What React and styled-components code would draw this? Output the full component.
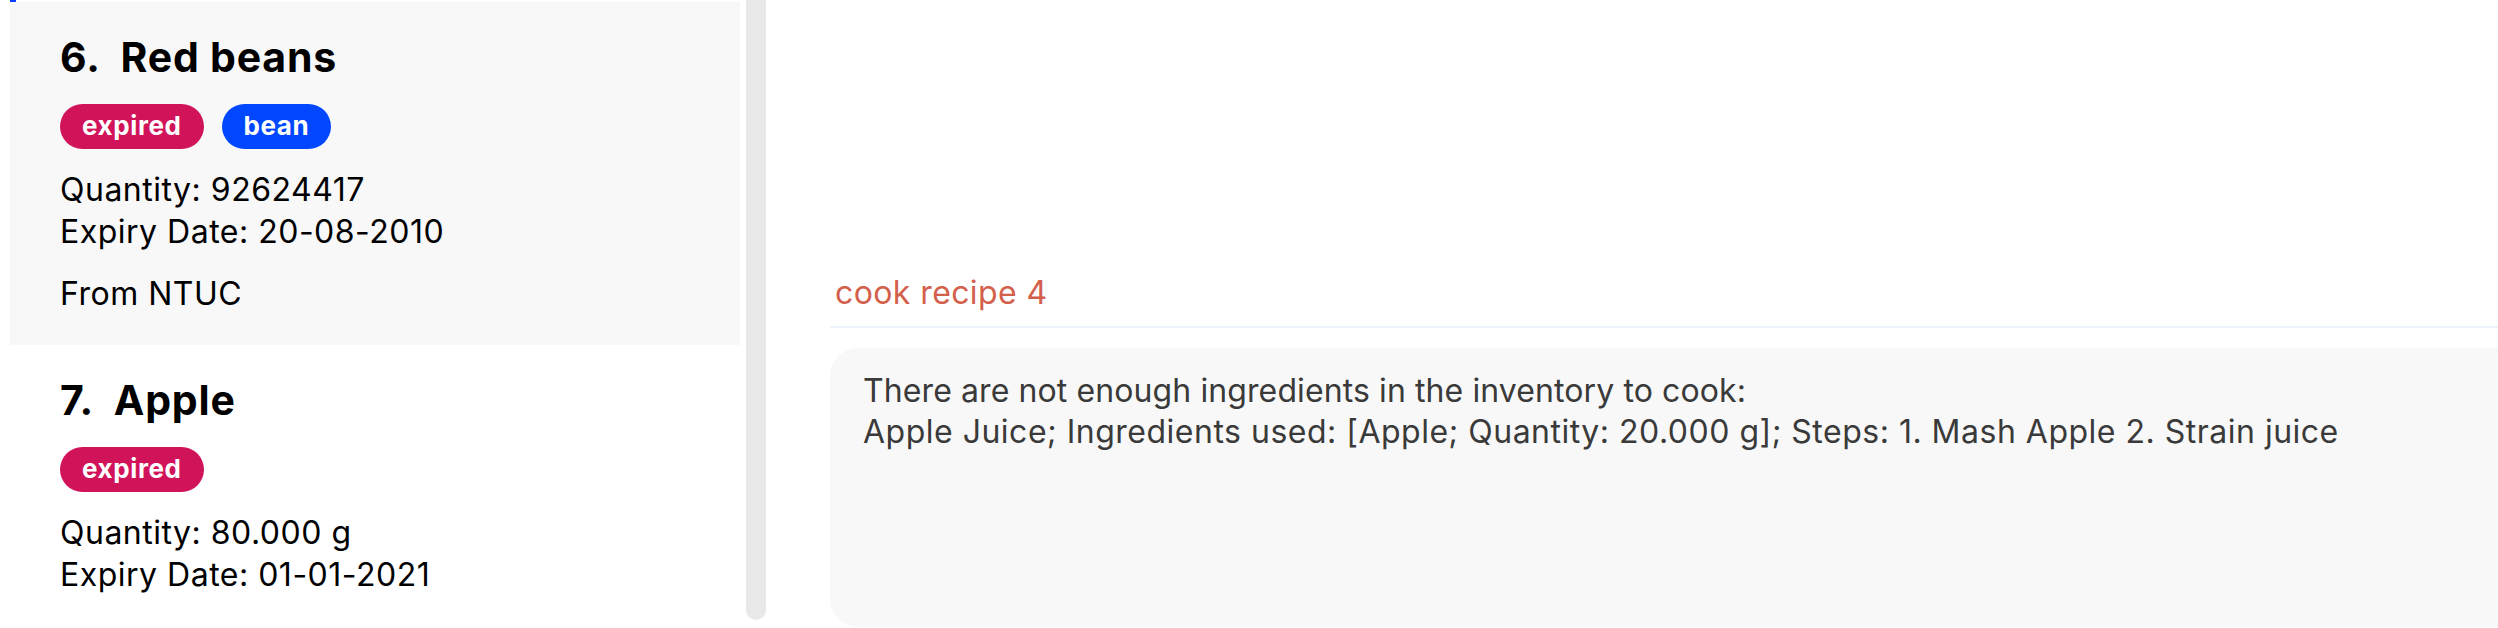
import React from "react";
import styled, { createGlobalStyle } from "styled-components";

const GlobalStyle = createGlobalStyle`
  html, body { margin: 0; padding: 0; background: #ffffff; }
  body { font-family: Inter, "Noto Sans", "DejaVu Sans", sans-serif; color: #000; }
  * { box-sizing: border-box; }
`;

const Page = styled.div`
  display: flex;
  width: 2498px;
  height: 628px;
  overflow: hidden;
  background: #ffffff;
`;

const ListPane = styled.div`
  display: flex;
  gap: 6px;
  width: 766px;
  height: 628px;
  padding-left: 10px;
  flex-shrink: 0;
`;

const ListColumn = styled.div`
  display: flex;
  flex-direction: column;
  width: 730px;
`;

const PrevCellTail = styled.div`
  height: 2px;
  display: flex;
`;

const FocusTick = styled.span`
  width: 6px;
  height: 2px;
  background: #0a3dff;
`;

const Card = styled.div`
  display: flex;
  flex-direction: column;
  align-items: flex-start;
  height: 343px;
  flex-shrink: 0;
  padding: 31px 0 0 50px;
  background: ${(p) => (p.$selected ? "#f8f8f8" : "transparent")};
`;

const Title = styled.div`
  font-size: 41px;
  line-height: 48px;
  font-weight: 700;
  letter-spacing: 0.8px;
  color: #000;
  white-space: pre;
`;

const Tags = styled.div`
  display: flex;
  gap: 18px;
  margin-top: 23px;
`;

const Tag = styled.span`
  display: inline-flex;
  align-items: center;
  justify-content: center;
  height: 45px;
  padding: 0 22px 2px;
  border-radius: 23px;
  font-size: 26px;
  font-weight: 700;
  letter-spacing: 0.6px;
  color: #ffffff;
  background: ${(p) => p.$bg};
`;

const Info = styled.div`
  font-size: 32px;
  line-height: 41.5px;
  letter-spacing: 0.5px;
  color: #000;
  margin-top: ${(p) => p.$gap || 0}px;
`;

const ScrollTrack = styled.div`
  width: 20px;
  height: 628px;
  flex-shrink: 0;
`;

const ScrollThumb = styled.div`
  width: 20px;
  height: 620px;
  background: #e9e9e9;
  border-radius: 0 0 10px 10px;
`;

const ResultPane = styled.div`
  flex: 1;
  display: flex;
  flex-direction: column;
  margin-left: 64px;
  padding-top: 273px;
  min-width: 0;
`;

const Command = styled.div`
  font-size: 32px;
  line-height: 40px;
  letter-spacing: 0.4px;
  color: #d3604b;
  padding-left: 5px;
`;

const Divider = styled.div`
  height: 2px;
  margin-top: 13px;
  background: #edf1fa;
`;

const MessageBox = styled.div`
  margin-top: 20px;
  margin-right: -40px;
  height: 279px;
  border-radius: 28px 0 0 28px;
  background: #f8f8f8;
  padding: 23px 0 0 33px;
  font-size: 32px;
  line-height: 40.6px;
  color: #3a3a3a;
`;

const Line = styled.div`
  white-space: pre;
  letter-spacing: ${(p) => p.$ls}px;
`;

const items = [
  {
    n: 6,
    name: "Red beans",
    tags: [
      { label: "expired", bg: "#d1135a" },
      { label: "bean", bg: "#0047ff" },
    ],
    qty: "92624417",
    exp: "20-08-2010",
    from: "From NTUC",
    selected: true,
  },
  {
    n: 7,
    name: "Apple",
    tags: [{ label: "expired", bg: "#d1135a" }],
    qty: "80.000 g",
    exp: "01-01-2021",
  },
];

export default function App() {
  return (
    <>
      <GlobalStyle />
      <Page>
        <ListPane>
          <ListColumn>
            <PrevCellTail>
              <FocusTick />
            </PrevCellTail>
            {items.map((it) => (
              <Card key={it.n} $selected={it.selected}>
                <Title>{`${it.n}.  ${it.name}`}</Title>
                <Tags>
                  {it.tags.map((t) => (
                    <Tag key={t.label} $bg={t.bg}>
                      {t.label}
                    </Tag>
                  ))}
                </Tags>
                <Info $gap={20}>Quantity: {it.qty}</Info>
                <Info>Expiry Date: {it.exp}</Info>
                {it.from && <Info $gap={21}>{it.from}</Info>}
              </Card>
            ))}
          </ListColumn>
          <ScrollTrack>
            <ScrollThumb />
          </ScrollTrack>
        </ListPane>
        <ResultPane>
          <Command>cook recipe 4</Command>
          <Divider />
          <MessageBox>
            <Line $ls={0.1}>There are not enough ingredients in the inventory to cook:</Line>
            <Line $ls={0.5}>
              Apple Juice; Ingredients used: [Apple; Quantity: 20.000 g]; Steps: 1. Mash Apple 2. Strain juice
            </Line>
          </MessageBox>
        </ResultPane>
      </Page>
    </>
  );
}
